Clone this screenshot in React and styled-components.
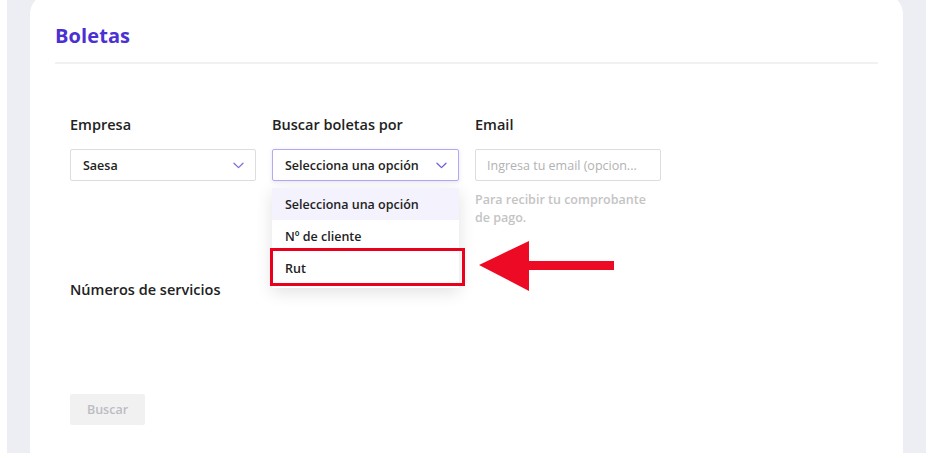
import React from "react";
import styled, { createGlobalStyle } from "styled-components";

const GlobalStyle = createGlobalStyle`
  body {
    margin: 0;
    background: #ffffff;
    font-family: "Open Sans", "Noto Sans", sans-serif;
  }
`;

const Chevron = ({ color = "#6f5fd8" }) => (
  <svg width="11" height="7" viewBox="0 0 11 7" fill="none">
    <path d="M1 1.2 L5.5 5.6 L10 1.2" stroke={color} strokeWidth="1.3" strokeLinecap="round" strokeLinejoin="round" />
  </svg>
);

const App = () => {
  const options = ["Selecciona una opción", "Nº de cliente", "Rut"];

  return (
    <>
      <GlobalStyle />
      <Page>
        <Card>
          <Header>
            <Title>Boletas</Title>
          </Header>
          <Form>
            <Row>
              <Field>
                <Label>Empresa</Label>
                <Select>
                  <SelectText>Saesa</SelectText>
                  <Chevron color="#7d70d8" />
                </Select>
              </Field>
              <Field>
                <Label>Buscar boletas por</Label>
                <Select $active>
                  <SelectText>Selecciona una opción</SelectText>
                  <Chevron />
                </Select>
                <Dropdown>
                  {options.map((opt, i) => (
                    <Option key={opt} $selected={i === 0}>
                      {opt}
                    </Option>
                  ))}
                  <Highlight />
                  <Arrow width="136" height="52" viewBox="0 0 136 52">
                    <polygon points="0,24 50,0 50,20 135,20 135,29 50,29 50,50" fill="#ec0a24" />
                  </Arrow>
                </Dropdown>
              </Field>
              <Field>
                <Label>Email</Label>
                <Input placeholder="Ingresa tu email (opcion..." />
                <Help>Para recibir tu comprobante de pago.</Help>
              </Field>
            </Row>
            <SectionTitle>Números de servicios</SectionTitle>
            <Button disabled>Buscar</Button>
          </Form>
        </Card>
      </Page>
    </>
  );
};

export default App;

const Page = styled.div`
  width: 919px;
  height: 453px;
  margin-left: 7px;
  padding: 0 23px;
  box-sizing: border-box;
  background: #eceef3;
  overflow: hidden;
`;

const Card = styled.div`
  height: 470px;
  margin-top: -6px;
  background: #ffffff;
  border-radius: 20px 20px 0 0;
  padding: 0 25px;
`;

const Header = styled.div`
  padding-top: 29px;
  padding-bottom: 13px;
  border-bottom: 2px solid #f1f1f4;
`;

const Title = styled.h1`
  margin: 0;
  font-size: 20px;
  line-height: 26px;
  font-weight: 700;
  color: #4b30d2;
  letter-spacing: 0.1px;
`;

const Form = styled.div`
  padding: 0 15px;
`;

const Row = styled.div`
  display: grid;
  grid-template-columns: 186px 187px 186px;
  column-gap: 16px;
  margin-top: 51px;
  height: 165px;
`;

const Field = styled.div`
  position: relative;
  display: flex;
  flex-direction: column;
`;

const Label = styled.div`
  font-size: 14.5px;
  line-height: 20px;
  font-weight: 600;
  color: #222;
  margin-bottom: 14px;
`;

const Select = styled.div`
  height: 32px;
  box-sizing: border-box;
  display: flex;
  align-items: center;
  justify-content: space-between;
  padding: 0 11px 0 12px;
  border: 1px solid ${(p) => (p.$active ? "#b3a9ec" : "#dddddd")};
  border-radius: 2px;
  box-shadow: ${(p) => (p.$active ? "0 1px 4px rgba(90, 70, 200, 0.15)" : "none")};
  background: #fff;
`;

const SelectText = styled.span`
  font-size: 12.5px;
  font-weight: 600;
  color: #222;
`;

const Dropdown = styled.div`
  position: absolute;
  top: 73px;
  left: 0;
  width: 187px;
  background: #fff;
  box-shadow: 0 4px 16px rgba(0, 0, 0, 0.12);
  padding-bottom: 4px;
`;

const Option = styled.div`
  height: 32px;
  display: flex;
  align-items: center;
  padding-left: 13px;
  font-size: 12.5px;
  font-weight: 600;
  color: #222;
  background: ${(p) => (p.$selected ? "#f4f3fd" : "#fff")};
`;

const Highlight = styled.div`
  position: absolute;
  left: -2px;
  top: 60px;
  width: 195px;
  height: 38px;
  box-sizing: border-box;
  border: 3px solid #e8001c;
`;

const Arrow = styled.svg`
  position: absolute;
  left: 207px;
  top: 53px;
`;

const Input = styled.input`
  height: 32px;
  box-sizing: border-box;
  border: 1px solid #dddddd;
  border-radius: 2px;
  padding: 0 11px;
  font-family: "Open Sans", "Noto Sans", sans-serif;
  font-size: 12.5px;
  font-weight: 500;
  outline: none;
  &::placeholder {
    color: #b2b2b2;
  }
`;

const Help = styled.div`
  margin-top: 10px;
  font-size: 12.5px;
  line-height: 18px;
  font-weight: 600;
  color: #c4c4c4;
  width: 186px;
`;

const SectionTitle = styled.div`
  font-size: 14.5px;
  line-height: 20px;
  font-weight: 600;
  color: #222;
`;

const Button = styled.button`
  margin-top: 94px;
  width: 75px;
  height: 31px;
  border: none;
  border-radius: 2px;
  background: #f1f1f1;
  color: #bcbcc4;
  font-family: "Open Sans", "Noto Sans", sans-serif;
  font-size: 12.5px;
  font-weight: 600;
`;
